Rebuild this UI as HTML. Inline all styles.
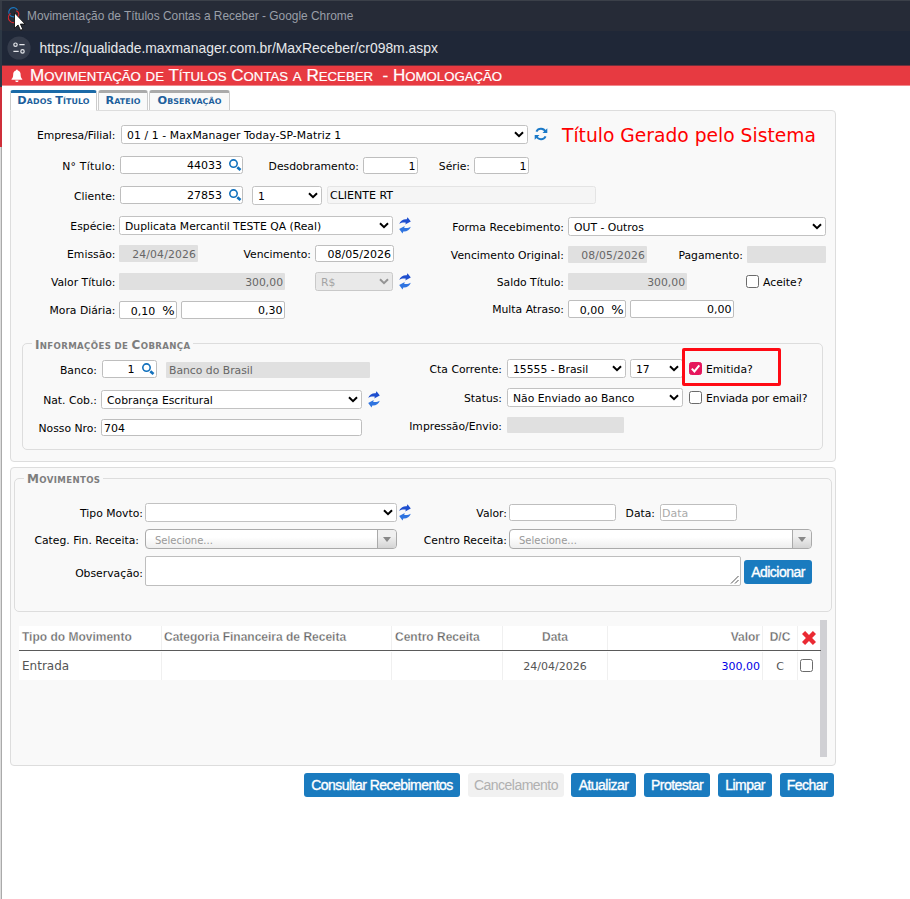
<!DOCTYPE html>
<html lang="pt-BR">
<head>
<meta charset="utf-8">
<title>Movimentação de Títulos Contas a Receber</title>
<style>
html,body{margin:0;padding:0;}
body{width:910px;height:899px;position:relative;overflow:hidden;background:#fff;
  font-family:"DejaVu Sans","Liberation Sans",sans-serif;font-size:10.8px;color:#000;}
*{box-sizing:border-box;}
.a{position:absolute;white-space:nowrap;}
/* window chrome */
#wt{left:0;top:0;width:910px;height:31px;background:#262b37;}
#wt span{position:absolute;left:27px;top:9px;font:11.9px "Liberation Sans",sans-serif;color:#9a9fa8;}
#ub{left:0;top:31px;width:910px;height:35px;background:#1f2737;}
#ub .ic{position:absolute;left:8px;top:6px;width:22px;height:22px;border-radius:11px;background:#353b49;}
#ub span{position:absolute;left:39.5px;top:9px;font:13.9px "Liberation Sans",sans-serif;color:#e6e8eb;}
#edge1{left:0;top:0;width:2px;height:87px;background:linear-gradient(#363b45 0,#363b45 30px,#2d3845 30px);}
#edge0{left:0;top:0;width:910px;height:1px;background:#3b4049;}
#edge2{left:0;top:87px;width:2px;height:60px;background:#cf2f3a;}
#edge3{left:0;top:147px;width:2px;height:752px;background:#dcdcdc;border-right:1px solid #aaa;}
#hd{left:2px;top:65px;width:908px;height:21px;background:#e73a41;border-top:1px solid #6f2f3b;border-bottom:1px solid #f1898d;}
#hd span{position:absolute;left:28.3px;top:-1px;font:12.4px/21px "Liberation Sans",sans-serif;transform-origin:0 0;transform:scaleX(1.066);text-transform:uppercase;color:#fff;white-space:pre;-webkit-text-stroke:0.2px #fff;}
#hd span i{font-style:normal;font-size:16px;}
/* tabs */
.tab{position:absolute;top:90px;height:20px;border:1px solid #ccc;border-top:3px solid #aaa;border-bottom:none;border-radius:3px 3px 0 0;background:#f9f9f9;
  font:bold 7.9px/16px "DejaVu Sans","Liberation Sans",sans-serif;text-transform:uppercase;letter-spacing:0.1px;color:#1d5f9c;text-align:center;white-space:nowrap;}
.tab i{font-style:normal;font-size:11.3px;}
.lg i{font-style:normal;}
.tab.on{border-top-color:#1b6aa7;background:#fff;z-index:3;height:20px;}
/* panels */
.pn{position:absolute;background:#f9f9f9;border:1px solid #ddd;border-radius:0 4px 4px 4px;}
.fs{position:absolute;border:1px solid #ddd;border-radius:5px;}
.lg{position:absolute;background:#f9f9f9;font:bold 8.6px/12px "DejaVu Sans","Liberation Sans",sans-serif;text-transform:uppercase;letter-spacing:0.35px;color:#7e7e7e;padding:0 3px;white-space:nowrap;}
.lg i{font-size:12px;}
/* labels */
.l{position:absolute;left:0;text-align:right;height:18px;line-height:22px;white-space:nowrap;}
.t{position:absolute;height:18px;line-height:22px;white-space:nowrap;}
/* inputs */
.i{position:absolute;height:18px;border:1px solid #bebebe;border-radius:2.5px;background:#fff;font-size:11px;line-height:18px;padding:0 3px;white-space:nowrap;overflow:hidden;}
.r{text-align:right;}
.n{letter-spacing:0.15px;}
.d{position:absolute;height:17px;background:#e0e0e0;color:#666;font-size:10.8px;line-height:19px;padding:0 4px;white-space:nowrap;overflow:hidden;border-radius:1px;}
.s{position:absolute;height:19px;border:1px solid #c2c2c2;border-radius:2.5px;background:#fff;line-height:19px;padding:0 0 0 5px;white-space:nowrap;overflow:hidden;}
.s svg{position:absolute;right:3px;top:5px;width:10px;height:7px;}
.s.off{background:#e9e9e9;color:#a4a4a4;border-color:#c9c9c9;}
.cb{position:absolute;width:13px;height:13px;border:1px solid #6b6b6b;border-radius:2.5px;background:#fff;}
.cb.on{background:#e6175c;border-color:#e6175c;}
.cb svg{position:absolute;left:0;top:0;width:11px;height:11px;}
.ico{position:absolute;}
/* select2-like */
.s2{position:absolute;height:20px;border:1px solid #aaa;border-radius:4px;background:linear-gradient(#fff 40%,#eee);font-size:10px;color:#999;line-height:21px;padding-left:9px;overflow:hidden;}
.s2 b{position:absolute;right:0;top:0;width:19px;height:18px;border-left:1px solid #aaa;background:linear-gradient(#f0f0f0 35%,#d4d4d4);border-radius:0 3px 3px 0;}
.s2 b:after{content:"";position:absolute;left:5px;top:7px;border:4px solid transparent;border-top:5px solid #888;border-bottom:none;}
/* buttons */
.bt{position:absolute;height:24px;border-radius:3px;background:#1a7bbf;color:#fff;font:14px "Liberation Sans",sans-serif;text-align:center;line-height:24px;white-space:nowrap;letter-spacing:-0.53px;-webkit-text-stroke:0.35px #fff;}
.bt.off{background:#f1f1f1;color:#b0b0b0;-webkit-text-stroke:0;}
/* table */
.th{position:absolute;top:626px;height:24px;background:#fff;font:bold 12px "Liberation Sans",sans-serif;color:#666;-webkit-text-stroke:0.3px #fff;line-height:23px;padding:0 3px;white-space:nowrap;border-right:1px solid #f0f0f0;}
.td{position:absolute;top:652px;height:28px;background:#fff;color:#555;font-size:12px;line-height:29px;padding:0 3px;white-space:nowrap;border-right:1px solid #f0f0f0;}
</style>
</head>
<body>
<!-- browser chrome -->
<div class="a" id="wt"><span>Movimentação de Títulos Contas a Receber - Google Chrome</span></div>
<div class="a" id="ub"><span>https://qualidade.maxmanager.com.br/MaxReceber/cr098m.aspx</span></div>
<div class="a" id="hd"><span><i>M</i>ovimentação<i> </i>de<i> T</i>ítulos<i> C</i>ontas<i> </i>a<i> R</i>eceber<i>  - H</i>omologação</span></div>
<div class="a" id="edge1"></div><div class="a" id="edge0"></div><div class="a" id="edge2"></div><div class="a" id="edge3"></div>


<!-- favicon + mouse pointer -->
<svg class="a" style="left:6px;top:4px;width:24px;height:28px;z-index:5" viewBox="0 0 24 28">
<path d="M11.5 6.2 A4.6 4.6 0 1 0 10.5 11.6" fill="none" stroke="#1b78c2" stroke-width="1.1"/>
<path d="M4.6 9.5 A5 5 0 1 0 11.8 11.2 M10.2 6.8 A4.2 4.2 0 0 1 12.6 11.8" fill="none" stroke="#e0262b" stroke-width="1.1"/>
<path d="M8.5 8.8 L8.5 24.3 L12.1 21 L14.5 26.3 L16.8 25.3 L14.4 20.1 L19.1 20.1 Z" fill="#fff" stroke="#111" stroke-width="0.9" stroke-linejoin="round"/>
</svg>
<!-- site settings icon -->
<svg class="a" style="left:7px;top:36px;width:24px;height:24px" viewBox="0 0 24 24">
<circle cx="12" cy="12" r="11.6" fill="#353c4b"/>
<circle cx="8.5" cy="8.7" r="1.7" fill="none" stroke="#e4e6ea" stroke-width="1.2"/>
<path d="M12.3 8.7 H17.6 M6.4 15.4 H11.7" stroke="#e4e6ea" stroke-width="1.3" fill="none"/>
<circle cx="15.5" cy="15.4" r="1.7" fill="none" stroke="#e4e6ea" stroke-width="1.2"/>
</svg>
<!-- bell -->
<svg class="a" style="left:11.3px;top:69px;width:11.8px;height:13.6px" viewBox="0 0 13 15">
<path d="M6.5 0.6 C7.1 0.6 7.5 1 7.5 1.6 C9.6 2.1 10.6 3.8 10.6 6 C10.6 8.6 11.2 9.8 12.4 11 L12.4 11.8 L0.6 11.8 L0.6 11 C1.8 9.8 2.4 8.6 2.4 6 C2.4 3.8 3.4 2.1 5.5 1.6 C5.5 1 5.9 0.6 6.5 0.6 Z M4.7 12.6 L8.3 12.6 C8.3 13.7 7.5 14.4 6.5 14.4 C5.5 14.4 4.7 13.7 4.7 12.6 Z" fill="#fff"/>
</svg>

<!-- tabs -->
<div class="tab on" style="left:10px;width:87px;"><i>D</i>ados <i>T</i>ítulo</div>
<div class="tab" style="left:98px;width:50px;"><i>R</i>ateio</div>
<div class="tab" style="left:149px;width:81px;"><i>O</i>bservação</div>

<!-- panel 1 -->
<div class="pn" style="left:10px;top:110px;width:826px;height:352px;"></div>
<div class="a" style="left:11px;top:110px;width:85px;height:1px;background:#f9f9f9;z-index:4;"></div>

<!-- row: Empresa/Filial -->
<div class="l" style="width:115.5px;top:125px;">Empresa/Filial:</div>
<div class="s" style="left:121px;top:125px;width:407px;letter-spacing:0.1px;">01 / 1 - MaxManager Today-SP-Matriz 1<svg viewBox="0 0 10 7"><path d="M1 1.2 L5 5.2 L9 1.2" fill="none" stroke="#000" stroke-width="2"/></svg></div>
<svg class="ico" style="left:533.5px;top:127px;width:14px;height:14px" viewBox="0 0 14 14"><path d="M11.6 5 A5 5 0 0 0 2.4 4.6 M2.4 9 A5 5 0 0 0 11.6 9.4" fill="none" stroke="#1a79c8" stroke-width="2"/><path d="M13.3 1.2 L13.3 6 L8.5 6 Z M0.7 12.8 L0.7 8 L5.5 8 Z" fill="#1a79c8"/></svg>
<div class="t" style="left:562px;top:122px;height:28px;font:18.7px/28px 'DejaVu Sans',sans-serif;color:#f00;">Título Gerado pelo Sistema</div>
<!-- row: N° Título -->
<div class="l" style="width:115.5px;top:156px;letter-spacing:0.25px">N° Título:</div>
<div class="i r" style="left:120px;top:156px;width:123px;padding-right:20px;">44033<svg class="ico" style="right:0px;top:1px;width:14px;height:14px" viewBox="0 0 14 14"><circle cx="5.5" cy="5.6" r="3.7" fill="none" stroke="#1271bd" stroke-width="1.6"/><path d="M9.3 9.2 L12.5 12" stroke="#1271bd" stroke-width="2.7"/></svg></div>
<div class="l" style="width:359px;top:156px;">Desdobramento:</div>
<div class="i r" style="left:363px;top:157px;width:55px;height:17px;line-height:17px;padding-right:1.5px;">1</div>
<div class="l" style="width:470px;top:156px;">Série:</div>
<div class="i r" style="left:474px;top:157px;width:55px;height:17px;line-height:17px;padding-right:1.5px;">1</div>
<!-- row: Cliente -->
<div class="l" style="width:115.5px;top:186px;">Cliente:</div>
<div class="i r" style="left:120px;top:186px;width:123px;padding-right:20px;">27853<svg class="ico" style="right:0px;top:1px;width:14px;height:14px" viewBox="0 0 14 14"><circle cx="5.5" cy="5.6" r="3.7" fill="none" stroke="#1271bd" stroke-width="1.6"/><path d="M9.3 9.2 L12.5 12" stroke="#1271bd" stroke-width="2.7"/></svg></div>
<div class="s" style="left:252px;top:186px;width:70px;">1<svg viewBox="0 0 10 7"><path d="M1 1.2 L5 5.2 L9 1.2" fill="none" stroke="#000" stroke-width="2"/></svg></div>
<div class="i" style="left:327px;top:186px;width:269px;padding-left:2px;background:#f5f5f5;border-color:#e4e4e4;">CLIENTE RT</div>
<!-- row: Espécie -->
<div class="l" style="width:115.5px;top:216px;">Espécie:</div>
<div class="s" style="left:119px;top:216px;width:274px;">Duplicata Mercantil TESTE QA (Real)<svg viewBox="0 0 10 7"><path d="M1 1.2 L5 5.2 L9 1.2" fill="none" stroke="#000" stroke-width="2"/></svg></div>
<svg class="ico" style="left:398.6px;top:216.5px;width:12px;height:17px" viewBox="0 0 12 17"><path d="M0.2 6.9 C1.3 3.4 4.5 1.9 7.7 2.2 L8.5 0.2 L11.8 4.5 L6.2 7.5 L6.9 5.8 C4.6 5.2 2.2 5.8 0.2 6.9 Z" fill="#1f4fcf"/><path d="M11.8 9.7 C10.7 13.2 7.5 14.7 4.3 14.4 L3.5 16.4 L0.2 12.1 L5.8 9.1 L5.1 10.8 C7.4 11.4 9.8 10.8 11.8 9.7 Z" fill="#2f74e0"/></svg>
<div class="l" style="width:564px;top:217px;">Forma Recebimento:</div>
<div class="s" style="left:568px;top:217px;width:258px;">OUT - Outros<svg viewBox="0 0 10 7"><path d="M1 1.2 L5 5.2 L9 1.2" fill="none" stroke="#000" stroke-width="2"/></svg></div>
<!-- row: Emissão -->
<div class="l" style="width:115.5px;top:244px;">Emissão:</div>
<div class="d n" style="left:119px;top:245px;width:79px;text-align:right;padding-right:2px;">24/04/2026</div>
<div class="l" style="width:311px;top:244px;">Vencimento:</div>
<div class="i r" style="left:315px;top:245px;width:79px;height:17px;line-height:17px;padding-right:2px;">08/05/2026</div>
<div class="l" style="width:564px;top:245px;">Vencimento Original:</div>
<div class="d n" style="left:568px;top:246px;width:79px;text-align:right;padding-right:2px;">08/05/2026</div>
<div class="l" style="width:743px;top:245px;">Pagamento:</div>
<div class="d" style="left:747px;top:246px;width:79px;"></div>
<!-- row: Valor Título -->
<div class="l" style="width:115.5px;top:272px;">Valor Título:</div>
<div class="d r" style="left:119px;top:273px;width:166px;padding-right:2px;">300,00</div>
<div class="s off" style="left:315px;top:272px;width:78px;">R$<svg viewBox="0 0 10 7"><path d="M1 1.2 L5 5.2 L9 1.2" fill="none" stroke="#949494" stroke-width="2"/></svg></div>
<svg class="ico" style="left:398.6px;top:272.5px;width:12px;height:17px" viewBox="0 0 12 17"><path d="M0.2 6.9 C1.3 3.4 4.5 1.9 7.7 2.2 L8.5 0.2 L11.8 4.5 L6.2 7.5 L6.9 5.8 C4.6 5.2 2.2 5.8 0.2 6.9 Z" fill="#1f4fcf"/><path d="M11.8 9.7 C10.7 13.2 7.5 14.7 4.3 14.4 L3.5 16.4 L0.2 12.1 L5.8 9.1 L5.1 10.8 C7.4 11.4 9.8 10.8 11.8 9.7 Z" fill="#2f74e0"/></svg>
<div class="l" style="width:564px;top:272px;">Saldo Título:</div>
<div class="d r" style="left:568px;top:273px;width:119px;padding-right:2px;">300,00</div>
<div class="cb" style="left:746px;top:275px;"></div>
<div class="t" style="left:763px;top:272px;">Aceite?</div>
<!-- row: Mora Diária -->
<div class="l" style="width:115.5px;top:300px;">Mora Diária:</div>
<div class="i r" style="left:119px;top:301px;width:58px;height:18px;line-height:17px;padding-right:1.5px;border-radius:2px;">0,10&nbsp; <span style="font-size:13px">%</span></div>
<div class="i r" style="left:181px;top:301px;width:104px;height:18px;line-height:17px;padding-right:1.5px;border-radius:2px;">0,30</div>
<div class="l" style="width:564px;top:299px;">Multa Atraso:</div>
<div class="i r" style="left:568px;top:300px;width:58px;height:18px;line-height:17px;padding-right:1.5px;border-radius:2px;">0,00&nbsp; <span style="font-size:13px">%</span></div>
<div class="i r" style="left:630px;top:300px;width:104px;height:18px;line-height:17px;padding-right:1.5px;border-radius:2px;">0,00</div>

<!-- fieldset: Informações de Cobrança -->
<div class="fs" style="left:22px;top:343px;width:801px;height:107px;"></div>
<div class="lg" style="left:32px;top:339px;"><i>I</i>nformações de <i>C</i>obrança</div>
<div class="l" style="width:97px;top:360px;">Banco:</div>
<div class="i r" style="left:102px;top:360px;width:55px;padding-right:21.5px;">1<svg class="ico" style="right:1.5px;top:1px;width:14px;height:14px" viewBox="0 0 14 14"><circle cx="5.5" cy="5.6" r="3.7" fill="none" stroke="#1271bd" stroke-width="1.6"/><path d="M9.3 9.2 L12.5 12" stroke="#1271bd" stroke-width="2.7"/></svg></div>
<div class="d" style="left:166px;top:362px;width:204px;height:16px;line-height:18px;padding-left:3px;">Banco do Brasil</div>
<div class="l" style="width:502px;top:359px;">Cta Corrente:</div>
<div class="s" style="left:507px;top:359px;width:119px;">15555 - Brasil<svg viewBox="0 0 10 7"><path d="M1 1.2 L5 5.2 L9 1.2" fill="none" stroke="#000" stroke-width="2"/></svg></div>
<div class="s" style="left:630px;top:359px;width:53px;">17<svg viewBox="0 0 10 7"><path d="M1 1.2 L5 5.2 L9 1.2" fill="none" stroke="#000" stroke-width="2"/></svg></div>
<div class="a" style="left:681.5px;top:348px;width:99px;height:37.5px;border:3px solid #ff0a14;border-radius:2px;"></div>
<div class="cb on" style="left:689px;top:362px;"><svg viewBox="0 0 11 11"><path d="M1.8 5.6 L4.4 8.4 L9.3 2.3" fill="none" stroke="#fff" stroke-width="2"/></svg></div>
<div class="t" style="left:706px;top:359px;">Emitida?</div>
<div class="l" style="width:97px;top:390px;">Nat. Cob.:</div>
<div class="s" style="left:101px;top:390px;width:261px;">Cobrança Escritural<svg viewBox="0 0 10 7"><path d="M1 1.2 L5 5.2 L9 1.2" fill="none" stroke="#000" stroke-width="2"/></svg></div>
<svg class="ico" style="left:367.6px;top:390.5px;width:12px;height:17px" viewBox="0 0 12 17"><path d="M0.2 6.9 C1.3 3.4 4.5 1.9 7.7 2.2 L8.5 0.2 L11.8 4.5 L6.2 7.5 L6.9 5.8 C4.6 5.2 2.2 5.8 0.2 6.9 Z" fill="#1f4fcf"/><path d="M11.8 9.7 C10.7 13.2 7.5 14.7 4.3 14.4 L3.5 16.4 L0.2 12.1 L5.8 9.1 L5.1 10.8 C7.4 11.4 9.8 10.8 11.8 9.7 Z" fill="#2f74e0"/></svg>
<div class="l" style="width:502px;top:388px;">Status:</div>
<div class="s" style="left:507px;top:388px;width:176px;">Não Enviado ao Banco<svg viewBox="0 0 10 7"><path d="M1 1.2 L5 5.2 L9 1.2" fill="none" stroke="#000" stroke-width="2"/></svg></div>
<div class="cb" style="left:689px;top:391px;"></div>
<div class="t" style="left:706px;top:388px;letter-spacing:-0.12px;">Enviada por email?</div>
<div class="l" style="width:97px;top:418px;">Nosso Nro:</div>
<div class="i" style="left:101px;top:419px;width:261px;height:17px;line-height:17px;padding-left:2px;">704</div>
<div class="l" style="width:502px;top:416px;">Impressão/Envio:</div>
<div class="d" style="left:507px;top:417px;width:117px;height:16px;"></div>

<!-- panel 2 -->
<div class="pn" style="left:10px;top:467px;width:826px;height:299px;border-radius:4px;"></div>


<!-- fieldset: Movimentos -->
<div class="fs" style="left:14px;top:478px;width:818px;height:134px;"></div>
<div class="lg" style="left:24px;top:473px;"><i>M</i>ovimentos</div>
<div class="l" style="width:143px;top:503px;">Tipo Movto:</div>
<div class="s" style="left:145px;top:503px;width:252px;"><svg viewBox="0 0 10 7"><path d="M1 1.2 L5 5.2 L9 1.2" fill="none" stroke="#000" stroke-width="2"/></svg></div>
<svg class="ico" style="left:398.6px;top:503.5px;width:12px;height:17px" viewBox="0 0 12 17"><path d="M0.2 6.9 C1.3 3.4 4.5 1.9 7.7 2.2 L8.5 0.2 L11.8 4.5 L6.2 7.5 L6.9 5.8 C4.6 5.2 2.2 5.8 0.2 6.9 Z" fill="#1f4fcf"/><path d="M11.8 9.7 C10.7 13.2 7.5 14.7 4.3 14.4 L3.5 16.4 L0.2 12.1 L5.8 9.1 L5.1 10.8 C7.4 11.4 9.8 10.8 11.8 9.7 Z" fill="#2f74e0"/></svg>
<div class="l" style="width:507px;top:503px;">Valor:</div>
<div class="i" style="left:509px;top:504px;width:107px;height:17px;"></div>
<div class="l" style="width:655px;top:503px;">Data:</div>
<div class="i" style="left:660px;top:504px;width:77px;height:17px;line-height:17px;padding-left:1px;color:#aaa;">Data</div>
<div class="l" style="width:139px;top:530px;">Categ. Fin. Receita:</div>
<div class="s2" style="left:145px;top:529px;width:252px;">Selecione...<b></b></div>
<div class="l" style="width:507px;top:530px;">Centro Receita:</div>
<div class="s2" style="left:509px;top:529px;width:303px;">Selecione...<b></b></div>
<div class="l" style="width:143px;top:563px;">Observação:</div>
<div class="i" style="left:145px;top:556px;width:596px;height:30px;border-radius:2px;"><svg class="ico" style="right:1px;bottom:1px;width:9px;height:9px" viewBox="0 0 9 9"><path d="M8.5 1 L1 8.5 M8.5 5 L5 8.5" stroke="#555" stroke-width="1" fill="none"/></svg></div>
<div class="bt" style="left:744px;top:560px;width:68px;">Adicionar</div>

<!-- grid -->
<div class="a" style="left:19px;top:626px;width:802px;height:24px;background:#fff;"></div>
<div class="a" style="left:19px;top:650px;width:802px;height:1px;background:#5a5a5a;z-index:2;"></div>
<div class="a" style="left:19px;top:651px;width:802px;height:29px;background:#fff;"></div>
<div class="th" style="left:19px;width:143px;">Tipo do Movimento</div>
<div class="th" style="left:162px;width:230px;padding-left:2px;">Categoria Financeira de Receita</div>
<div class="th" style="left:392px;width:111px;">Centro Receita</div>
<div class="th" style="left:503px;width:105px;text-align:center;">Data</div>
<div class="th" style="left:608px;width:155px;text-align:right;padding-right:2px;">Valor</div>
<div class="th" style="left:763px;width:35px;text-align:center;">D/C</div>
<div class="th" style="left:798px;width:23px;border-right:none;"><svg class="ico" style="left:4px;top:5px;width:14px;height:14px" viewBox="0 0 14 14"><path d="M3.1 0 L7 3.9 L10.9 0 L14 3.1 L10.1 7 L14 10.9 L10.9 14 L7 10.1 L3.1 14 L0 10.9 L3.9 7 L0 3.1 Z" fill="#ea2a33"/></svg></div>
<div class="td" style="left:19px;width:143px;">Entrada</div>
<div class="td" style="left:162px;width:230px;"></div>
<div class="td" style="left:392px;width:111px;"></div>
<div class="td" style="left:503px;width:105px;text-align:center;font-size:11px;">24/04/2026</div>
<div class="td" style="left:608px;width:155px;text-align:right;padding-right:2px;color:#0000e6;font-size:11px;">300,00</div>
<div class="td" style="left:763px;width:35px;text-align:center;font-size:11px;">C</div>
<div class="td" style="left:798px;width:23px;border-right:none;"><div class="cb" style="left:2px;top:7px;"></div></div>
<div class="a" style="left:820px;top:620px;width:7px;height:137px;background:#d0d0d4;"></div>

<!-- buttons -->
<div class="bt" style="left:304px;top:773px;width:156px;">Consultar Recebimentos</div>
<div class="bt off" style="left:468px;top:773px;width:96px;">Cancelamento</div>
<div class="bt" style="left:571px;top:773px;width:65px;">Atualizar</div>
<div class="bt" style="left:644px;top:773px;width:66px;">Protestar</div>
<div class="bt" style="left:718px;top:773px;width:54px;">Limpar</div>
<div class="bt" style="left:780px;top:773px;width:54px;">Fechar</div>

</body>
</html>
